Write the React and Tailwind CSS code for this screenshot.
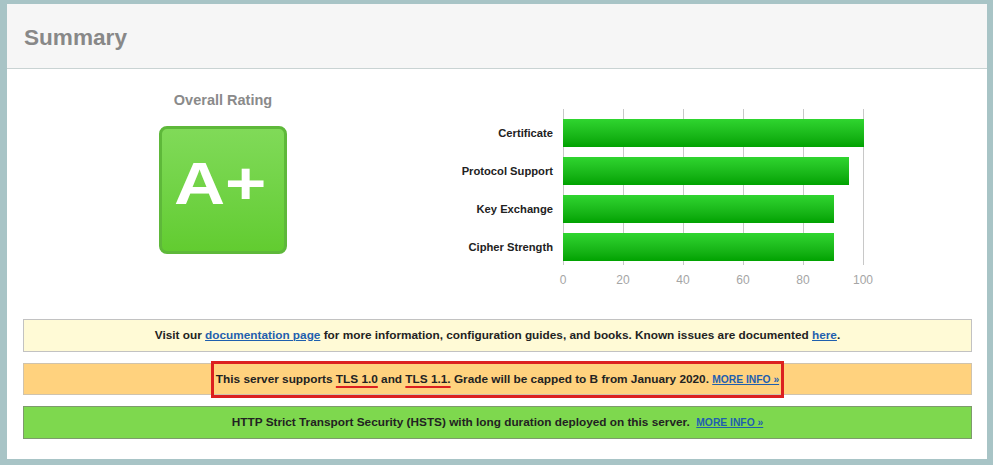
import React from "react";

const bars = [
  { label: "Certificate", value: 100 },
  { label: "Protocol Support", value: 95 },
  { label: "Key Exchange", value: 90 },
  { label: "Cipher Strength", value: 90 },
];

const ticks = [0, 20, 40, 60, 80, 100];

const MoreInfo = () => (
  <a href="#" className="text-[10.3px] font-bold text-[#1f5fae] underline">
    MORE INFO »
  </a>
);

const App = () => {
  return (
    <div
      className="w-[993px] h-[465px] bg-[#a8c4c6] pt-[4px] pl-[7px] pr-[6px] pb-[6px]"
      style={{ fontFamily: '"Liberation Sans", Arial, sans-serif' }}
    >
      <div className="bg-white h-full flex flex-col">
        {/* header */}
        <div className="h-[65px] bg-[#f6f6f6] border-b border-[#c9d3d3] px-[17px] flex items-center">
          <h1 className="text-[22.6px] font-bold text-[#888] pt-[4px]">Summary</h1>
        </div>

        {/* rating + chart */}
        <div className="h-[250px] flex items-start">
          <div className="ml-[136px] w-[160px] pt-[23px] flex flex-col items-center">
            <div className="text-[14.5px] font-bold text-[#8a8a8a] leading-[17px]">Overall Rating</div>
            <div className="mt-[17px] w-[128px] h-[128px] rounded-[8px] border-[3px] border-[#5eb83a] bg-linear-to-b from-[#80da58] to-[#62cc30] flex items-center justify-center">
              <span className="text-white font-bold text-[60px] leading-none -mt-[12px] -ml-[6px] inline-block scale-x-118">
                A+
              </span>
            </div>
          </div>

          <div className="ml-[130px] pt-[40px] flex">
            <div className="w-[120px] pt-[10px] flex flex-col gap-[10px]">
              {bars.map((b) => (
                <div
                  key={b.label}
                  className="h-[28px] flex items-center justify-end text-[11.2px] font-bold text-[#222]"
                >
                  {b.label}
                </div>
              ))}
            </div>
            <div className="ml-[10px]">
              <div className="relative w-[301px] h-[156px]">
                {ticks.map((t) => (
                  <div
                    key={t}
                    className="absolute top-0 bottom-0 w-px bg-[#c8c8c8]"
                    style={{ left: t * 3 }}
                  />
                ))}
                <div className="relative pt-[10px] flex flex-col gap-[10px]">
                  {bars.map((b) => (
                    <div
                      key={b.label}
                      className="h-[28px] bg-linear-to-b from-[#2fd52f] to-[#00a200]"
                      style={{ width: b.value * 3 + 1 }}
                    />
                  ))}
                </div>
              </div>
              <div className="relative h-[20px] mt-[6px]">
                {ticks.map((t) => (
                  <span
                    key={t}
                    className="absolute top-0 -translate-x-1/2 text-[12px] text-[#a5a5a5]"
                    style={{ left: t * 3 }}
                  >
                    {t}
                  </span>
                ))}
              </div>
            </div>
          </div>
        </div>

        {/* notices */}
        <div className="mx-[16px] mr-[15px] flex flex-col gap-[11px] text-[11.8px] font-bold text-[#222]">
          <div className="h-[33px] bg-[#fffad6] border border-[#c2c2c2] flex items-center justify-center">
            <span>
              Visit our{" "}
              <a href="#" className="text-[#1f5fae] underline">documentation page</a>{" "}
              for more information, configuration guides, and books. Known issues are documented{" "}
              <a href="#" className="text-[#1f5fae] underline">here</a>.
            </span>
          </div>

          <div className="h-[32px] bg-[#ffd27e] border border-[#cfc3ad] flex items-center justify-center">
            <div className="h-[37px] shrink-0 border-[3px] border-[#dc2020] px-[2px] leading-[31px] whitespace-nowrap">
              This server supports{" "}
              <span className="underline decoration-[#dc2020] decoration-[2px] underline-offset-[3px]">TLS 1.0</span>
              {" "}and{" "}
              <span className="underline decoration-[#dc2020] decoration-[2px] underline-offset-[3px]">TLS 1.1.</span>
              {" "}Grade will be capped to B from January 2020.{" "}
              <MoreInfo />
            </div>
          </div>

          <div className="h-[33px] bg-[#7ed84e] border border-[#7d9a6d] flex items-center justify-center">
            <span className="whitespace-pre">
              HTTP Strict Transport Security (HSTS) with long duration deployed on this server.{"  "}
              <MoreInfo />
            </span>
          </div>
        </div>
      </div>
    </div>
  );
};

export default App;
